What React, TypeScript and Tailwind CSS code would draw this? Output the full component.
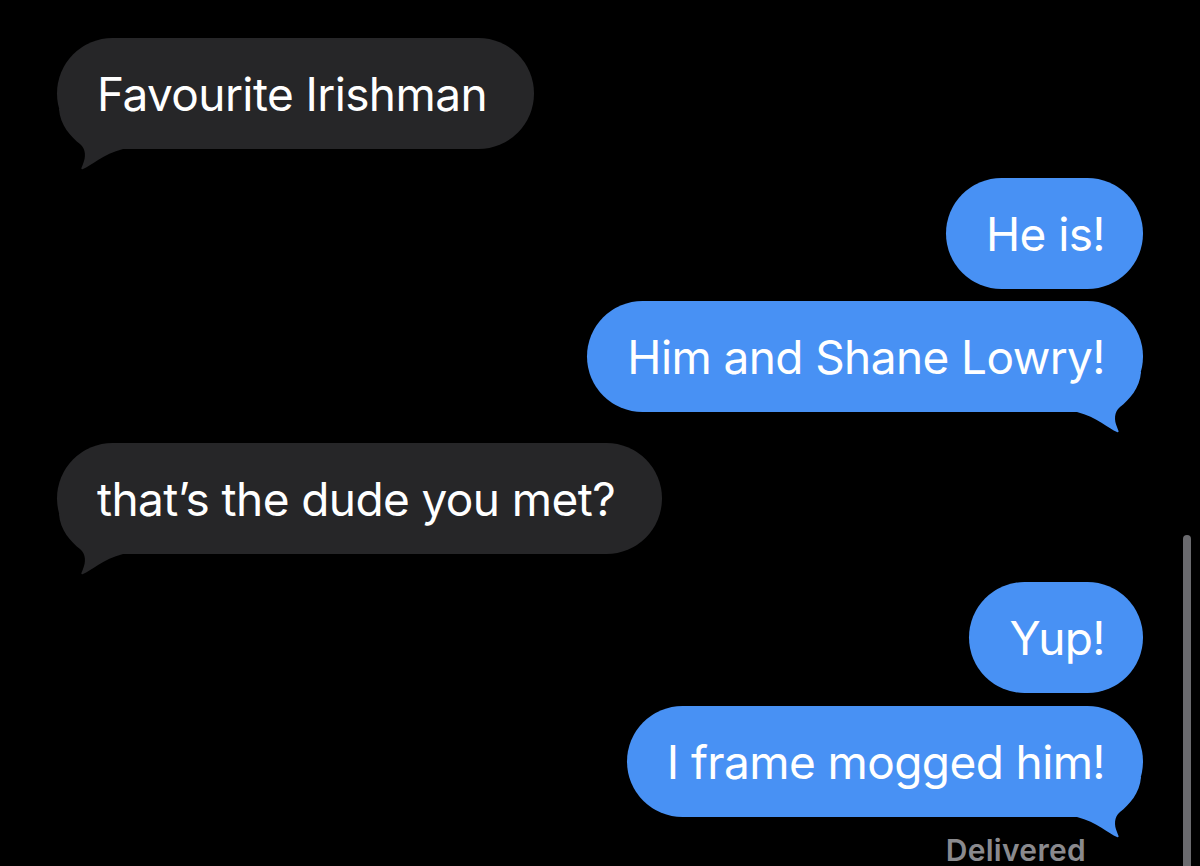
import type { ReactNode } from "react";

type Side = "in" | "out";

function Tail({ side }: { side: Side }) {
    if (side === "in") {
        return (
            <svg className="absolute left-0 bottom-[-22px]" width="70" height="62" viewBox="0 0 70 62">
                <path d="M2 0 C3 16 14 28 23 35 C29 40 29 48 26 55 C25 58 23 61 26 60 C34 57 46 45 66 40 L66 0 Z" fill="#262628" />
            </svg>
        );
    }
    return (
        <svg className="absolute right-0 bottom-[-22px]" width="70" height="62" viewBox="0 0 70 62">
            <path d="M68 0 C67 16 56 28 47 35 C41 40 41 48 44 55 C45 58 47 61 44 60 C36 57 24 45 4 40 L4 0 Z" fill="#4891f4" />
        </svg>
    );
}

function Bubble({ side, tail, children }: { side: Side; tail?: boolean; children: ReactNode }) {
    const isIn = side === "in";
    return (
        <div className={`flex ${isIn ? "justify-start" : "justify-end"}`}>
            <div className={`relative h-[111px] rounded-[56px] flex items-center pl-[40px] ${isIn ? "bg-[#262628] pr-[47px]" : "bg-[#4891f4] pr-[38px]"}`}>
                {tail && <Tail side={side} />}
                <span className="relative text-white text-[46px] leading-none tracking-[-0.6px] whitespace-nowrap">{children}</span>
            </div>
        </div>
    );
}

function App() {
    return (
        <div className="relative w-[1200px] h-[866px] overflow-hidden bg-black" style={{ fontFamily: "Inter, 'Noto Sans', sans-serif" }}>
            <div className="flex flex-col pt-[38px] px-[57px]">
                <Bubble side="in" tail>Favourite Irishman</Bubble>
                <div className="h-[29px]"></div>
                <Bubble side="out">He is!</Bubble>
                <div className="h-[12px]"></div>
                <Bubble side="out" tail>Him and Shane Lowry!</Bubble>
                <div className="h-[31px]"></div>
                <Bubble side="in" tail>that’s the dude you met?</Bubble>
                <div className="h-[28px]"></div>
                <Bubble side="out">Yup!</Bubble>
                <div className="h-[13px]"></div>
                <Bubble side="out" tail>I frame mogged him!</Bubble>
                <div className="flex justify-end pr-[57px] pt-[18px]">
                    <span className="text-[30px] leading-none font-semibold tracking-[0.3px] text-[#8a8a8e]">Delivered</span>
                </div>
            </div>
            <div className="absolute right-[9px] top-[535px] w-[8px] h-[340px] rounded-full bg-[#6a6a6e]"></div>
        </div>
    );
}

export default App;
